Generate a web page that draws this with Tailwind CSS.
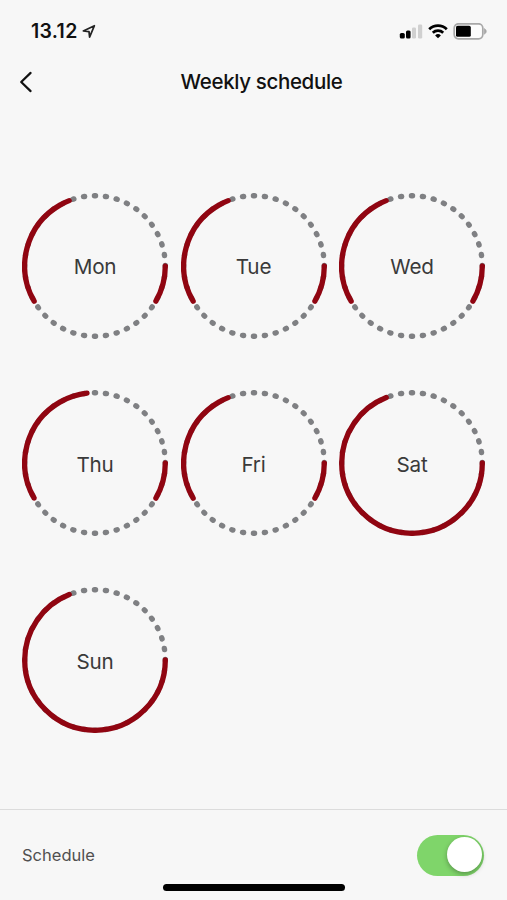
<!DOCTYPE html>
<html lang="en">
  <head>
    <meta charset="utf-8" />
    <meta name="viewport" content="width=device-width, initial-scale=1.0" />
    <title>Weekly schedule</title>
    <script src="https://cdn.jsdelivr.net/npm/@tailwindcss/browser@4"></script>
  </head>
  <body
    class="flex flex-col h-screen overflow-hidden bg-[#f7f7f7] text-[#111] font-['Inter','Liberation_Sans',sans-serif]"
  >
    <!-- status bar -->
    <div class="flex items-center justify-between h-[62px] pl-[31px] pr-5">
      <div class="flex items-center gap-1">
        <span class="text-[19.5px] font-semibold tracking-[0.3px] pt-px">13.12</span>
        <svg class="w-[15px] h-[15px]" viewBox="0 0 15 15" fill="none" stroke="#222" stroke-width="1.7" stroke-linejoin="round">
          <path d="M12.4 1.7 1.3 7 7 7.6 7.6 13.2Z" />
        </svg>
      </div>
      <div class="flex items-center">
        <svg class="w-6 h-4" viewBox="0 0 24 16">
          <rect x="0.8" y="10" width="5" height="5.5" rx="1.6" fill="#000" />
          <rect x="7" y="7.5" width="4.6" height="8" rx="1.5" fill="#000" />
          <rect x="13" y="4.5" width="4" height="11" rx="1.2" fill="#d0d0d0" />
          <rect x="19" y="1.5" width="4.2" height="14" rx="1.2" fill="#d0d0d0" />
        </svg>
        <svg class="w-5 h-4 ml-[5px]" viewBox="0 0 20 16" fill="none" stroke="#000" stroke-width="2.7">
          <path d="M1.2 6.2a12.6 12.6 0 0 1 17.6 0" />
          <path d="M4.8 9.8a7.5 7.5 0 0 1 10.4 0" />
          <path d="M10 15.2 7.1 12.4a4.2 4.2 0 0 1 5.8 0Z" fill="#000" stroke="none" />
        </svg>
        <svg class="w-[34px] h-[17px] ml-[5px]" viewBox="0 0 34 17">
          <rect x="1.2" y="0.8" width="28.6" height="15" rx="4.2" fill="#fdfdfd" stroke="#a8a8a8" stroke-width="1.7" />
          <rect x="3" y="2.8" width="14.8" height="11" rx="1.6" fill="#000" />
          <path d="M31.2 5.6c2.8 1.2 2.8 4.4 0 5.6Z" fill="#a8a8a8" stroke="#a8a8a8" stroke-width="0.6" />
        </svg>
      </div>
    </div>

    <!-- title bar -->
    <header class="grid grid-cols-3 items-center h-10 px-[19px]">
      <svg class="w-[14px] h-[22px] -mt-px" viewBox="0 0 14 22" fill="none" stroke="#111" stroke-width="2.2" stroke-linecap="round" stroke-linejoin="round">
        <path d="M11.6 1.9 2.2 11l9.4 9.1" />
      </svg>
      <h1 class="justify-self-center ml-[16px] whitespace-nowrap text-[20.5px] font-medium tracking-[-0.35px]">Weekly schedule</h1>
    </header>

    <svg class="hidden">
      <!-- 40 dots, one every 9 degrees -->
      <symbol id="dots" viewBox="0 0 146 146">
        <circle cx="73" cy="73" r="70.3" fill="none" stroke="#7f8083" stroke-width="5.4" stroke-linecap="round" pathLength="400" stroke-dasharray="1 9" stroke-dashoffset="0.5" />
      </symbol>
    </svg>

    <!-- days -->
    <main
      id="days"
      class="grid grid-cols-[146px_146px_146px] content-start gap-x-[12.5px] gap-y-[51.1px] grow pt-[91px] pl-[22px] text-[20.7px] tracking-[-0.2px] text-[#3a3a3a]"
    ></main>

    <footer class="flex items-center justify-between shrink-0 relative h-[91px] pl-[22px] pr-[23px] border-t border-[#dcdcdc]">
      <span class="text-[16.5px] text-[#505050]">Schedule</span>
      <span class="flex items-center justify-end w-[67px] h-[41px] pr-[2px] rounded-full bg-[#7fd56a]">
        <span class="w-[35px] h-[35px] -mt-px rounded-full bg-white shadow-[0_2px_5px_rgba(0,0,0,0.3)]"></span>
      </span>
      <span class="absolute left-[163px] bottom-[9px] w-[182px] h-[7px] rounded-full bg-black"></span>
    </footer>

    <script>
      // arcs are [start, length] in degrees, clockwise from 3 o'clock
      const days = [
        ["Mon", [[0, 30], [150, 98.5]]],
        ["Tue", [[0, 30], [150, 98.5]]],
        ["Wed", [[0, 30], [150, 98.5]]],
        ["Thu", [[0, 30], [150, 113.5]]],
        ["Fri", [[0, 30], [150, 98.5]]],
        ["Sat", [[0, 248.5]]],
        ["Sun", [[0, 248.5]]],
      ];

      document.getElementById("days").innerHTML = days
        .map(
          ([name, arcs]) => `
          <div class="grid place-items-center h-[146px]">
            <svg class="col-start-1 row-start-1 w-[146px] h-[146px]" viewBox="0 0 146 146" fill="none">
              <use href="#dots" width="146" height="146" />
              ${arcs
                .map(
                  ([start, len]) =>
                    `<circle cx="73" cy="73" r="70.3" stroke="#900511" stroke-width="5.3" stroke-linecap="round" pathLength="360" stroke-dasharray="${len} ${360 - len}" transform="rotate(${start} 73 73)" />`
                )
                .join("")}
            </svg>
            <span class="col-start-1 row-start-1 pt-[2px]">${name}</span>
          </div>`
        )
        .join("");
    </script>
  </body>
</html>
